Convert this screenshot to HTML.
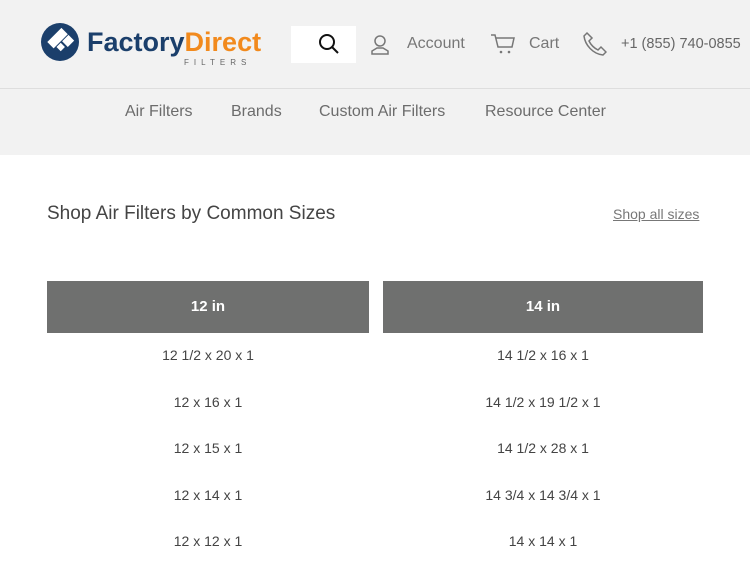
<!DOCTYPE html>
<html><head><style>
body{margin:0;width:750px;height:563px;overflow:hidden;background:#fff;font-family:"Liberation Sans",sans-serif;}
.hdr{position:absolute;left:0;top:0;width:750px;height:155px;background:#f2f2f2;}
.line{position:absolute;left:0;top:88px;width:750px;height:1px;background:#dedede;}
.t{position:absolute;white-space:nowrap;}
.nav{color:#6c6c6c;font-size:16px;top:103px;}
.box{position:absolute;top:281px;height:52px;background:#6f706f;color:#fff;font-size:15px;font-weight:bold;text-align:center;line-height:52px;}
.it{position:absolute;font-size:14px;color:#444;text-align:center;width:322px;}
</style></head><body>
<div class="hdr"></div><div class="line"></div>
<svg style="position:absolute;left:40px;top:22px" width="40" height="40" viewBox="0 0 40 40"><circle cx="20" cy="20" r="19" fill="#1b3f6b"/><g fill="#fff" transform="rotate(45 20 20)"><rect x="11" y="9" width="9" height="20"/><rect x="21" y="9" width="8" height="9"/><rect x="21" y="20" width="6" height="6"/></g></svg>
<div class="t" style="left:87px;top:27px;font-size:27px;font-weight:bold;letter-spacing:0px"><span style="color:#1b3f6b">Factory</span><span style="color:#f28a1d">Direct</span></div>
<div class="t" style="left:184px;top:58px;font-size:8px;letter-spacing:5px;color:#666">FILTERS</div>
<div style="position:absolute;left:291px;top:26px;width:65px;height:37px;background:#fff"></div>
<svg style="position:absolute;left:318px;top:33px" width="22" height="22" viewBox="0 0 22 22"><circle cx="9" cy="9" r="7" fill="none" stroke="#111" stroke-width="2"/><path d="M14 14l6 6" stroke="#111" stroke-width="2"/></svg>
<svg style="position:absolute;left:370px;top:34px" width="20" height="22" viewBox="0 0 20 22"><circle cx="10" cy="7" r="5" fill="none" stroke="#777" stroke-width="1.5"/><path d="M2 20h16v-3l-5-3h-6l-5 3z" fill="none" stroke="#777" stroke-width="1.5"/></svg>
<div class="t" style="left:407px;top:35px;font-size:16px;color:#777">Account</div>
<svg style="position:absolute;left:490px;top:33px" width="26" height="22" viewBox="0 0 26 22"><path d="M1 2h4l3 12h14l2-9H6" fill="none" stroke="#777" stroke-width="1.5"/><circle cx="11" cy="19" r="1.3" fill="#777"/><circle cx="19" cy="19" r="1.3" fill="#777"/></svg>
<div class="t" style="left:529px;top:35px;font-size:16px;color:#777">Cart</div>
<svg style="position:absolute;left:583px;top:31px" width="24" height="26" viewBox="0 0 24 26"><path d="M4 2l5 5-3 3c2 4 5 7 9 9l3-3 5 5-3 3C10 23 2 14 1 5z" fill="none" stroke="#777" stroke-width="1.5"/></svg>
<div class="t" style="left:621px;top:36px;font-size:14.5px;color:#666">+1 (855) 740-0855</div>
<div class="t nav" style="left:125px">Air Filters</div>
<div class="t nav" style="left:231px">Brands</div>
<div class="t nav" style="left:319px">Custom Air Filters</div>
<div class="t nav" style="left:485px">Resource Center</div>
<div class="t" style="left:47px;top:203px;font-size:19px;color:#444">Shop Air Filters by Common Sizes</div>
<div class="t" style="left:613px;top:206px;font-size:14px;color:#777;text-decoration:underline">Shop all sizes</div>
<div class="box" style="left:47px;width:322px">12 in</div>
<div class="box" style="left:383px;width:320px">14 in</div>
<div class="it" style="left:47px;top:347px">12 1/2 x 20 x 1</div>
<div class="it" style="left:47px;top:394px">12 x 16 x 1</div>
<div class="it" style="left:47px;top:440px">12 x 15 x 1</div>
<div class="it" style="left:47px;top:487px">12 x 14 x 1</div>
<div class="it" style="left:47px;top:533px">12 x 12 x 1</div>
<div class="it" style="left:382px;top:347px">14 1/2 x 16 x 1</div>
<div class="it" style="left:382px;top:394px">14 1/2 x 19 1/2 x 1</div>
<div class="it" style="left:382px;top:440px">14 1/2 x 28 x 1</div>
<div class="it" style="left:382px;top:487px">14 3/4 x 14 3/4 x 1</div>
<div class="it" style="left:382px;top:533px">14 x 14 x 1</div>
</body></html>
